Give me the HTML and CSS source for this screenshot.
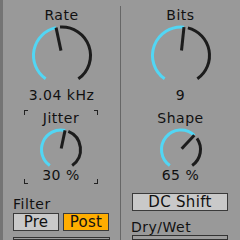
FILE: index.html
```html
<!DOCTYPE html>
<html lang="en">
<head>
  <meta charset="UTF-8" />
  <title>Redux</title>
  <link rel="stylesheet" href="styles.css">
</head>
<body>
  <div class="device">
    <div class="col col-left">
      <div class="param">
        <div class="param-label">Rate</div>
        <svg class="knob" width="64" height="60" viewBox="0 0 64 60">
          <path class="arc-on" d="M15.65 55.85 A28.5 28.5 0 0 1 26.07 4.62" />
          <path class="arc-off" d="M30.01 4.07 A28.5 28.5 0 0 1 48.35 55.85" />
          <path class="needle" d="M26.07 4.62 L30.96 27.61" />
        </svg>
        <div class="param-value">3.04 kHz</div>
      </div>

      <div class="param boxed">
        <span class="corner tl"></span><span class="corner tr"></span>
        <span class="corner bl"></span><span class="corner br"></span>
        <div class="param-label">Jitter</div>
        <svg class="knob" width="46" height="41" viewBox="0 0 46 41">
          <path class="arc-on" d="M11.81 39.47 A19.5 19.5 0 0 1 27.05 4.43" />
          <path class="arc-off" d="M30.30 5.42 A19.5 19.5 0 0 1 34.19 39.47" />
          <path class="needle" d="M27.05 4.43 L23.21 22.52" />
        </svg>
        <div class="param-value">30 %</div>
      </div>

      <div class="section">
        <div class="section-label">Filter</div>
        <div class="btn-row">
          <button class="btn">Pre</button>
          <button class="btn on">Post</button>
        </div>
      </div>
      <div class="slider slider-left"></div>
    </div>

    <div class="col col-right">
      <div class="param">
        <div class="param-label">Bits</div>
        <svg class="knob" width="64" height="60" viewBox="0 0 64 60">
          <path class="arc-on" d="M15.65 55.85 A28.5 28.5 0 0 1 34.98 4.16" />
          <path class="arc-off" d="M38.89 4.85 A28.5 28.5 0 0 1 48.35 55.85" />
          <path class="needle" d="M34.98 4.16 L32.52 27.53" />
        </svg>
        <div class="param-value">9</div>
      </div>

      <div class="param param-gap">
        <div class="param-label">Shape</div>
        <svg class="knob" width="46" height="41" viewBox="0 0 46 41">
          <path class="arc-on" d="M11.81 39.47 A19.5 19.5 0 1 1 36.30 9.24" />
          <path class="arc-off" d="M38.97 12.31 A19.5 19.5 0 0 1 34.19 39.47" />
          <path class="needle" d="M36.30 9.24 L23.68 22.77" />
        </svg>
        <div class="param-value">65 %</div>
      </div>

      <button class="btn btn-wide">DC Shift</button>
      <div class="section-label drywet">Dry/Wet</div>
      <div class="slider slider-right"></div>
    </div>
  </div>
</body>
</html>
```

FILE: styles.css
```css
body {
  margin: 0;
  width: 240px;
  height: 240px;
  overflow: hidden;
  background: #999;
  font-family: 'DejaVu Sans', sans-serif;
  color: #111;
}
.device {
  display: flex;
  height: 240px;
  border-left: 3px solid #747474;
  box-sizing: border-box;
}
.col {
  display: flex;
  flex-direction: column;
}
.col-left {
  width: 117px;
  padding-top: 7px;
}
.col-right {
  width: 119px;
  margin-top: 6px;
  padding-top: 1px;
  border-left: 1px solid #666;
}
.param {
  display: flex;
  flex-direction: column;
  align-items: center;
}
.param-label, .param-value, .section-label {
  font-size: 14px;
  line-height: 16px;
  letter-spacing: 0.5px;
  white-space: nowrap;
}
.param-value {
  margin-top: 4px;
}
.boxed .param-value, .param-gap .param-value {
  margin-top: 0;
}
.knob {
  display: block;
  fill: none;
  stroke-width: 3;
}
.arc-on {
  stroke: #52d6f4;
}
.arc-off, .needle {
  stroke: #1c1c1c;
}
.boxed {
  position: relative;
  margin: 7px 22px 0 21px;
  padding-bottom: 1px;
}
.param-gap {
  margin-top: 7px;
}
.corner {
  position: absolute;
  width: 3px;
  height: 4px;
  border: 0 solid #222;
}
.tl { top: 0; left: 0; border-top-width: 1px; border-left-width: 1px; }
.tr { top: 0; right: 0; border-top-width: 1px; border-right-width: 1px; }
.bl { bottom: 0; left: 0; border-bottom-width: 1px; border-left-width: 1px; }
.br { bottom: 0; right: 0; border-bottom-width: 1px; border-right-width: 1px; }
.section {
  margin-top: 12px;
  padding-left: 10px;
}
.btn-row {
  display: flex;
  gap: 4px;
  margin-top: 1px;
}
.btn {
  box-sizing: border-box;
  width: 46px;
  height: 18px;
  padding: 0;
  border: 1px solid #3a3a3a;
  background: #c9c9c9;
  font-family: 'DejaVu Sans', sans-serif;
  font-size: 15px;
  line-height: 16px;
  letter-spacing: 0.3px;
  color: #111;
}
.btn.on {
  background: #ffad00;
}
.btn-wide {
  width: 96px;
  height: 19px;
  margin: 10px 0 0 11px;
}
.drywet {
  margin-top: 8px;
  padding-left: 10px;
}
.slider {
  box-sizing: border-box;
  height: 20px;
  border: 1px solid #333;
  background: #9d9d9d;
}
.slider-left {
  width: 97px;
  margin: 6px 0 0 10px;
}
.slider-right {
  width: 96px;
  margin: 0 0 0 11px;
}
```
